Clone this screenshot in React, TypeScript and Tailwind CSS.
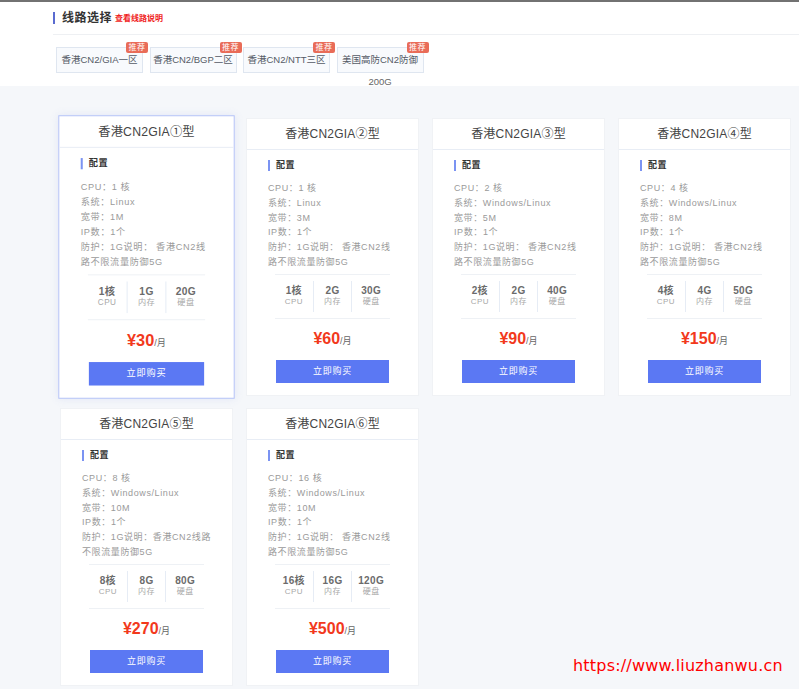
import React from 'react';

interface Plan {
  name: string;
  cpu: string;
  os: string;
  bw: string;
  guard: [string, string];
  core: string;
  mem: string;
  disk: string;
  price: string;
}

const FONT = "font-['Liberation_Sans','Noto_Sans_CJK_SC',sans-serif]";

const tabs = [
  { label: '香港CN2/GIA一区' },
  { label: '香港CN2/BGP二区' },
  { label: '香港CN2/NTT三区' },
  { label: '美国高防CN2防御', extra: '200G' },
];

const guardA: [string, string] = ['防护：1G说明： 香港CN2线', '路不限流量防御5G'];
const guardB: [string, string] = ['防护：1G说明：香港CN2线路', '不限流量防御5G'];

const plans: Plan[] = [
  { name: '香港CN2GIA①型', cpu: '1 核', os: 'Linux', bw: '1M', guard: guardA, core: '1核', mem: '1G', disk: '20G', price: '30' },
  { name: '香港CN2GIA②型', cpu: '1 核', os: 'Linux', bw: '3M', guard: guardA, core: '1核', mem: '2G', disk: '30G', price: '60' },
  { name: '香港CN2GIA③型', cpu: '2 核', os: 'Windows/Linux', bw: '5M', guard: guardA, core: '2核', mem: '2G', disk: '40G', price: '90' },
  { name: '香港CN2GIA④型', cpu: '4 核', os: 'Windows/Linux', bw: '8M', guard: guardA, core: '4核', mem: '4G', disk: '50G', price: '150' },
  { name: '香港CN2GIA⑤型', cpu: '8 核', os: 'Windows/Linux', bw: '10M', guard: guardB, core: '8核', mem: '8G', disk: '80G', price: '270' },
  { name: '香港CN2GIA⑥型', cpu: '16 核', os: 'Windows/Linux', bw: '10M', guard: guardA, core: '16核', mem: '16G', disk: '120G', price: '500' },
];

function Stat({ value, label, last }: { value: string; label: string; last?: boolean }) {
  return (
    <div className={`flex-1 flex flex-col items-center justify-center ${last ? '' : 'border-r border-[#e6ecf5]'}`}>
      <div className="text-[10px] leading-[12px] font-bold text-[#6b6b6b] tracking-[0.4px]">{value}</div>
      <div className="text-[8px] leading-[10px] text-[#a8a8a8] tracking-[0.4px]">{label}</div>
    </div>
  );
}

function PlanCard({ plan, active }: { plan: Plan; active?: boolean }) {
  return (
    <div
      className={`bg-white h-[278px] flex flex-col border ${
        active
          ? 'border-[#b4c2f6] scale-[1.02] shadow-[0_0_8px_rgba(120,140,220,0.15)]'
          : 'border-[#f0f2f5]'
      }`}
    >
      <div className="h-[31px] flex items-center justify-center border-b border-[#e8edf5] text-[12px] text-[#444] tracking-[0.2px]">
        {plan.name}
      </div>
      <div className="px-[21px] pt-[10px]">
        <div className="flex items-center h-[11px] border-l-2 border-[#7b93f2] pl-[6px] text-[9px] font-bold text-[#333] tracking-[0.5px]">
          配置
        </div>
        <div className="mt-[10px] text-[9px] leading-[14.8px] text-[#9a9a9a] tracking-[0.6px]">
          <div>CPU：{plan.cpu}</div>
          <div>系统：{plan.os}</div>
          <div>宽带：{plan.bw}</div>
          <div>IP数：1个</div>
          <div>{plan.guard[0]}</div>
          <div>{plan.guard[1]}</div>
        </div>
      </div>
      <div className="mx-[28px] mt-[4px] border-t border-b border-[#eef1f5] py-[6px] flex h-[45px]">
        <Stat value={plan.core} label="CPU" />
        <Stat value={plan.mem} label="内存" />
        <Stat value={plan.disk} label="硬盘" last />
      </div>
      <div className="h-[32px] flex items-end justify-center pb-[2px]">
        <span className="text-[16px] leading-[20px] font-bold text-[#f2391c]">¥{plan.price}</span>
        <span className="text-[9px] leading-[15px] text-[#666]">/月</span>
      </div>
      <div className="mx-[29px] mt-[9px] h-[23px] bg-[#5b78f3] flex items-center justify-center text-[9px] text-white tracking-[0.8px]">
        立即购买
      </div>
    </div>
  );
}

export default function App() {
  return (
    <div className={`relative min-h-[689px] bg-[#f5f7fa] ${FONT}`}>
      <div className="bg-white border-t-2 border-[#727272] h-[86px]">
        <div className="pl-[53px]">
          <div className="h-[32px] flex items-center">
            <div className="w-[2px] h-[12px] bg-[#5a6bd0]" />
            <span className="ml-[7px] text-[12px] font-bold text-[#333] tracking-[0.5px]">线路选择</span>
            <span className="ml-[3px] mt-[1px] text-[8px] font-bold text-[#f01d1d]">查看线路说明</span>
          </div>
          <div className="h-px bg-[#eef0f3]" />
          <div className="flex gap-[6.5px] pl-[3px] pt-[12px]">
            {tabs.map((t) => (
              <div
                key={t.label}
                className="relative w-[87px] h-[26px] border border-[#dfe6f0] bg-[#f8fafd] text-center text-[9.5px] leading-[22px] pt-[1px] text-[#555b66] whitespace-nowrap"
              >
                <div>{t.label}</div>
                {t.extra && <div className="text-[#666] leading-[22px]">{t.extra}</div>}
                <span className="absolute -top-[6px] -right-[6px] w-[22px] h-[11px] rounded-[2px] bg-[#e96c58] text-white text-[8px] leading-[11px] text-center tracking-[0.5px]">
                  推荐
                </span>
              </div>
            ))}
          </div>
        </div>
      </div>

      <div className="pt-[32px] pl-[60px] pb-[3px]">
        <div className="grid grid-cols-[repeat(4,173px)] gap-x-[13px] gap-y-[12px]">
          {plans.map((p, i) => (
            <PlanCard key={p.name} plan={p} active={i === 0} />
          ))}
        </div>
      </div>

      <div className="absolute left-[573px] top-[654px] text-[16px] text-[#ff0000] font-['DejaVu_Sans',sans-serif] tracking-[0.2px]">
        https://www.liuzhanwu.cn
      </div>
    </div>
  );
}
